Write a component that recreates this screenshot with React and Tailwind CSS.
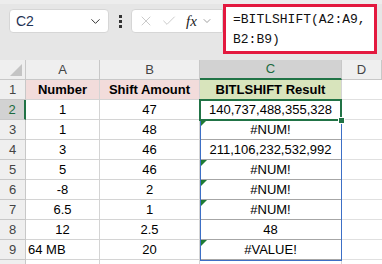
import React from 'react';
import { ChevronDown, X, Check } from 'lucide-react';

const rows = [
  ['1', '47', '140,737,488,355,328', false],
  ['1', '48', '#NUM!', true],
  ['3', '46', '211,106,232,532,992', false],
  ['5', '46', '#NUM!', true],
  ['-8', '2', '#NUM!', true],
  ['6.5', '1', '#NUM!', true],
  ['12', '2.5', '48', false],
  ['64 MB', '20', '#VALUE!', true],
];

const cell = 'h-[20px] border-r border-b border-[#d4d4d4] flex items-center justify-center';
const head = 'h-[20px] border-r border-b border-[#c8c8c8] bg-[#efefef] flex items-center justify-center text-[#444]';

function App() {
  return (
    <div className="relative w-[382px] h-[264px] overflow-hidden bg-white text-[13px] text-black" style={{ fontFamily: '"Liberation Sans", Arial, sans-serif' }}>
      {/* formula bar */}
      <div className="h-[60px] bg-[#e6e6e6] border-t-4 border-[#ededed] flex items-start pl-[9px]">
        <div className="mt-[5px] w-[100px] h-[24px] bg-white rounded border border-[#d6d6d6] flex items-center justify-between pl-[6px] pr-[5px]">
          <span className="text-[14px] text-[#1f3355]">C2</span>
          <ChevronDown size={15} strokeWidth={1.6} className="text-[#333]" />
        </div>
        <div className="w-[22px] h-[34px] flex flex-col items-center justify-center gap-[2px]">
          <span className="w-[3px] h-[3px] bg-[#333]" />
          <span className="w-[3px] h-[3px] bg-[#333]" />
          <span className="w-[3px] h-[3px] bg-[#333]" />
        </div>
        <div className="mt-[5px] w-[92px] h-[24px] bg-white rounded-l border border-[#d6d6d6] flex items-center pl-[6px] gap-[7px]">
          <X size={16} strokeWidth={1.2} className="text-[#bdbdbd]" />
          <Check size={16} strokeWidth={1.2} className="text-[#bdbdbd]" />
          <span className="ml-[2px] italic text-[15px] text-[#222]" style={{ fontFamily: '"Liberation Serif", serif' }}>fx</span>
          <ChevronDown size={12} strokeWidth={1.4} className="text-[#777] -ml-[3px]" />
        </div>
        <div className="w-[154px] h-[50px] bg-white border-[3px] border-[#e3193f] pl-[7px] pt-[3px] text-[13px] leading-[20px] text-[#111]" style={{ fontFamily: '"Liberation Mono", monospace' }}>
          <div>=BITLSHIFT(A2:A9,</div>
          <div>B2:B9)</div>
        </div>
      </div>

      {/* grid */}
      <div className="grid grid-cols-[26px_74px_100px_142px_40px]">
        <div className={head + ' relative'}>
          <div className="absolute right-[3px] bottom-[3px] w-0 h-0 border-l-[12px] border-l-transparent border-b-[12px] border-b-[#c4c4c4]" />
        </div>
        <div className={head}>A</div>
        <div className={head}>B</div>
        <div className="h-[20px] border-r border-[#c8c8c8] bg-[#d2d2d2] border-b-2 border-b-[#217346] flex items-center justify-center text-[#1b6b3f]">C</div>
        <div className={head}>D</div>

        <div className={head}>1</div>
        <div className={cell + ' bg-[#f2dcdb] font-bold'}>Number</div>
        <div className={cell + ' bg-[#f2dcdb] font-bold'}>Shift Amount</div>
        <div className={cell + ' bg-[#d8e4bc] font-bold'}>BITLSHIFT Result</div>
        <div className="h-[20px] border-b border-[#e0e0e0]" />

        {rows.map(([a, b, c, err], i) => (
          <React.Fragment key={i}>
            {i === 0 ? (
              <div className="h-[20px] bg-[#d2d2d2] border-b border-[#c8c8c8] border-r-2 border-r-[#217346] flex items-center justify-center text-[#1b6b3f]">2</div>
            ) : (
              <div className={head}>{i + 2}</div>
            )}
            <div className={cell + (a === '64 MB' ? ' justify-start pl-[2px]' : '')}>{a}</div>
            <div className={cell}>{b}</div>
            <div className="relative h-[20px] border-r border-b border-[#a6a6a6] flex items-center justify-center">
              {err && <div className="absolute left-[1px] top-0 w-0 h-0 border-t-[6px] border-t-[#1e7b34] border-r-[6px] border-r-transparent" />}
              {c}
            </div>
            <div className="h-[20px] border-b border-[#e0e0e0]" />
          </React.Fragment>
        ))}

        <div className={head}></div>
        <div className={cell}></div>
        <div className={cell}></div>
        <div className={cell}></div>
        <div className="h-[20px]" />
      </div>

      {/* spill range outline */}
      <div className="absolute left-[200px] top-[100px] w-[142px] h-[161px] border border-[#3c6fc6] pointer-events-none" />
      {/* active cell */}
      <div className="absolute left-[199px] top-[99px] w-[143px] h-[22px] border-2 border-[#217346] pointer-events-none" />
      <div className="absolute left-[338px] top-[117px] w-[7px] h-[7px] bg-[#217346] border border-white" />
    </div>
  );
}

export default App;
